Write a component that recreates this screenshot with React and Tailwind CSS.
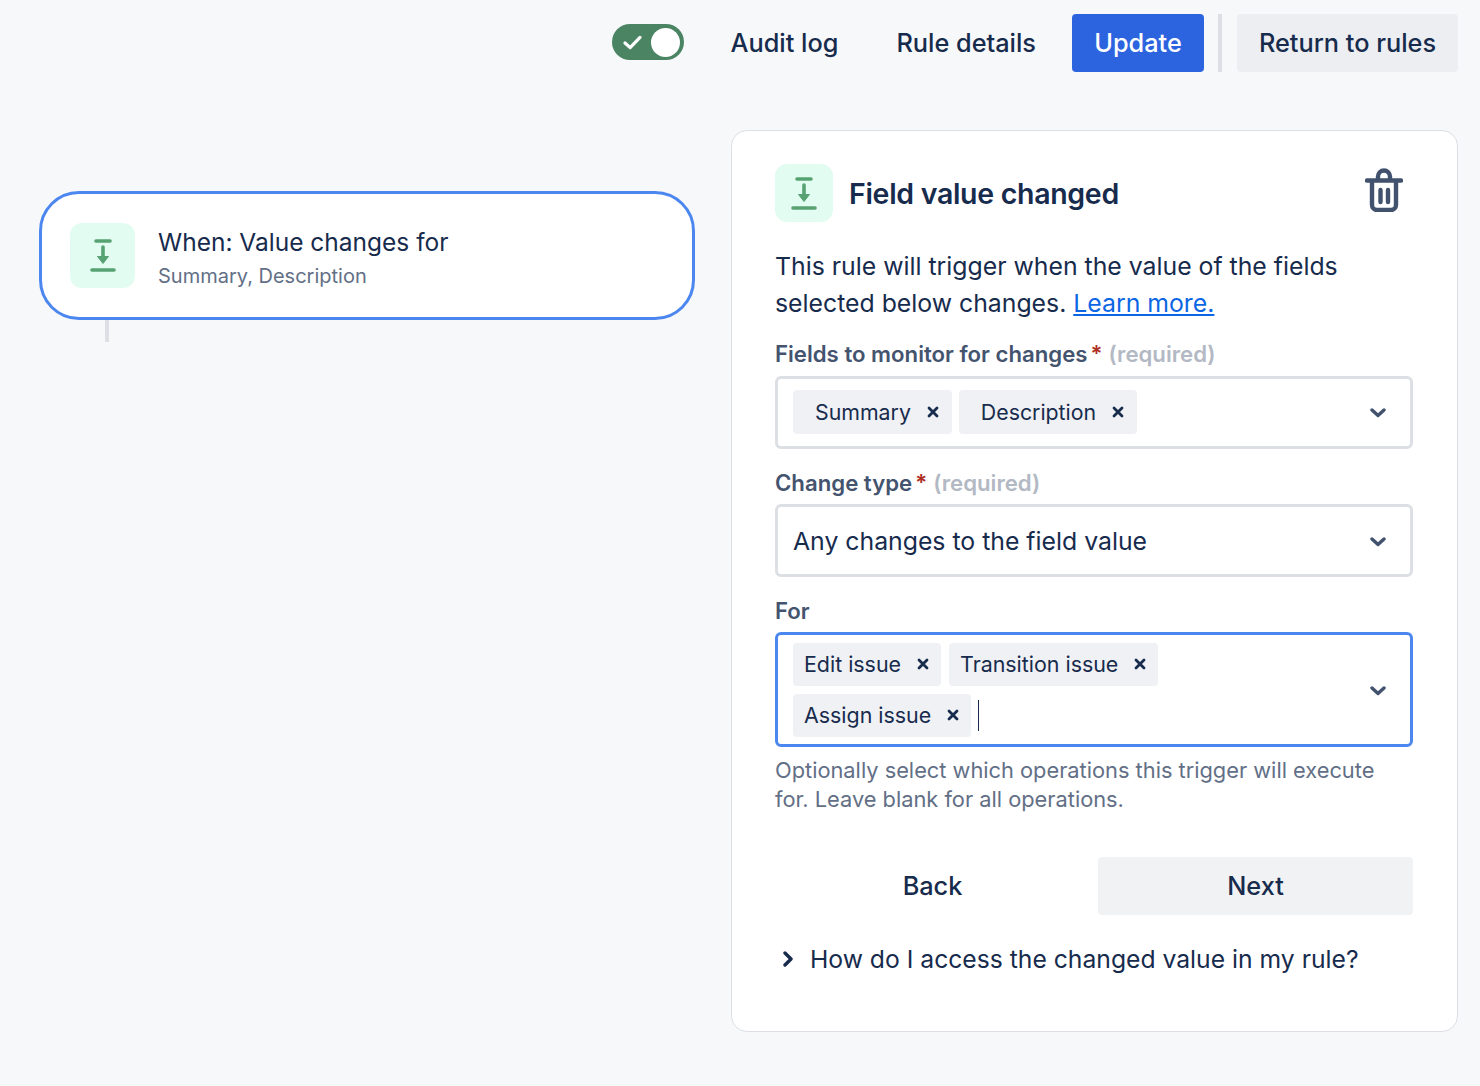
import React from 'react';

const TriggerIcon = ({ className }) => (
  <svg viewBox="0 0 26 33" className={className} fill="none">
    <path d="M6 2h14" stroke="#57a273" strokeWidth="3.6" strokeLinecap="round" />
    <path d="M2 31h22" stroke="#57a273" strokeWidth="3.6" strokeLinecap="round" />
    <path d="M13 8v10" stroke="#57a273" strokeWidth="3.6" strokeLinecap="round" />
    <path d="M7.5 17.5h11L13 24.5z" fill="#57a273" stroke="#57a273" strokeWidth="1" strokeLinejoin="round" />
  </svg>
);

const Chevron = () => (
  <svg viewBox="0 0 16 10" className="h-[10px] w-[16px]" fill="none">
    <path d="M2 2l6 5.5L14 2" stroke="#42526e" strokeWidth="3.4" strokeLinecap="round" strokeLinejoin="round" />
  </svg>
);

const Cross = () => (
  <svg viewBox="0 0 12 12" className="h-[12px] w-[12px]" fill="none">
    <path d="M2 2l8 8M10 2l-8 8" stroke="#172b4d" strokeWidth="2.8" strokeLinecap="round" />
  </svg>
);

const Tag = ({ label, wide }) => (
  <span className={`flex items-center rounded-[4px] bg-[#f0f1f4] text-[#172b4d] ${wide ? 'h-[44px] pl-[22px] pr-[13px] text-[21.3px]' : 'h-[43px] pl-[11px] pr-[12px] text-[21.4px]'}`}>
    <span className={wide ? 'pt-[2px]' : ''}>{label}</span>
    <span className="ml-[16px]"><Cross /></span>
  </span>
);

const Label = ({ text, required }) => (
  <div className="flex items-baseline text-[22.2px] leading-[28px] font-semibold text-[#44546f]">
    {text}
    {required && (
      <>
        <span className="ml-[3px] text-[#ae2e24]">*</span>
        <span className="ml-[6px] text-[#b3b9c4]">(required)</span>
      </>
    )}
  </div>
);

export default function App() {
  return (
    <div className="min-h-[1086px] bg-[#f7f8f9] font-['Inter',sans-serif] text-[#172b4d]">
      {/* Top bar */}
      <header className="flex h-[72px] items-end justify-end pr-[22px]">
        <div className="flex items-center">
          <div className="mb-[2px] flex h-[36px] w-[72px] items-center justify-between rounded-full bg-[#4a8463] pl-[11px] pr-[4px]">
            <svg viewBox="0 0 20 16" className="h-[15px] w-[19px]" fill="none">
              <path d="M2 8.5l5.5 5L18 2.5" stroke="#fff" strokeWidth="3.4" strokeLinecap="round" strokeLinejoin="round" />
            </svg>
            <span className="h-[29px] w-[29px] rounded-full bg-white" />
          </div>
          <span className="mb-[1px] ml-[47px] text-[25.3px] font-medium">Audit log</span>
          <span className="mb-[1px] ml-[58px] text-[25.3px] font-medium">Rule details</span>
          <button className="ml-[36px] h-[58px] w-[132px] rounded-[4px] bg-[#2c64e0] pb-[1px] text-[25.3px] font-medium text-white">Update</button>
          <span className="ml-[14px] h-[58px] w-[4px] bg-[#dcdfe4]" />
          <button className="ml-[15px] h-[58px] w-[221px] rounded-[4px] bg-[#eceef1] pb-[1px] text-[25.3px] font-medium">Return to rules</button>
        </div>
      </header>

      <div className="flex items-start pl-[39px] pt-[58px]">
        {/* Trigger node */}
        <div className="mt-[61px] w-[656px]">
          <div className="flex h-[129px] items-center rounded-[40px] border-[3px] border-[#4c87f0] bg-white pl-[28px]">
            <span className="flex h-[65px] w-[65px] items-center justify-center rounded-[12px] bg-[#e3fcf2]">
              <TriggerIcon className="h-[33px] w-[26px]" />
            </span>
            <div className="ml-[23px] pt-[4px]">
              <div className="text-[24.5px] leading-[34px]">When: Value changes for</div>
              <div className="mt-[3px] text-[20px] leading-[28px] text-[#626f86]">Summary, Description</div>
            </div>
          </div>
          <div className="ml-[66px] h-[22px] w-[4px] bg-[#dcdfe4]" />
        </div>

        {/* Config panel */}
        <section className="ml-[36px] h-[902px] w-[727px] rounded-[16px] border border-[#dcdfe4] bg-white pl-[43px] pr-[44px] pt-[33px]">
          <div className="flex items-center">
            <span className="flex h-[58px] w-[58px] items-center justify-center rounded-[12px] bg-[#e3fcf2]">
              <TriggerIcon className="h-[33px] w-[26px]" />
            </span>
            <h2 className="ml-[16px] pt-[2px] text-[28.5px] font-semibold tracking-[-0.3px]">Field value changed</h2>
            <svg viewBox="0 0 38 44" className="mb-[6px] ml-auto mr-[10px] h-[44px] w-[38px]" fill="none">
              <path d="M2 12.5h34" stroke="#42526e" strokeWidth="4.4" strokeLinecap="round" />
              <path d="M13 12V8.5a6 6 0 0112 0V12" stroke="#42526e" strokeWidth="4.4" />
              <path d="M7 13v24a5 5 0 005 5h14a5 5 0 005-5V13" stroke="#42526e" strokeWidth="4.4" />
              <path d="M15.5 22v12M23 22v12" stroke="#42526e" strokeWidth="4.4" strokeLinecap="round" />
            </svg>
          </div>

          <p className="mt-[26px] text-[24.8px] leading-[37px]">
            This rule will trigger when the value of the fields selected below changes.{' '}
            <a href="#" className="text-[#0c66e4] underline">Learn more.</a>
          </p>

          <div className="mt-[18px]"><Label text="Fields to monitor for changes" required /></div>
          <div className="mt-[8px] flex h-[73px] items-center justify-between rounded-[6px] border-[3px] border-[#dcdfe4] pl-[15px] pr-[24px]">
            <div className="flex gap-[7px] pb-[2px]">
              <Tag label="Summary" wide />
              <Tag label="Description" wide />
            </div>
            <Chevron />
          </div>

          <div className="mt-[20px]"><Label text="Change type" required /></div>
          <div className="mt-[7px] flex h-[73px] items-center justify-between rounded-[6px] border-[3px] border-[#dcdfe4] pl-[15px] pr-[24px] pt-[2px]">
            <span className="text-[24.8px]">Any changes to the field value</span>
            <Chevron />
          </div>

          <div className="mt-[20px]"><Label text="For" /></div>
          <div className="mt-[7px] flex h-[115px] items-center justify-between rounded-[6px] border-[3px] border-[#4c87f0] pl-[15px] pr-[24px] pt-[2px]">
            <div className="flex flex-col gap-[8px] pb-[2px]">
              <div className="flex gap-[8px]">
                <Tag label="Edit issue" />
                <Tag label="Transition issue" />
              </div>
              <div className="flex items-center">
                <Tag label="Assign issue" />
                <span className="ml-[7px] h-[31px] w-[1px] bg-[#172b4d]" />
              </div>
            </div>
            <Chevron />
          </div>

          <p className="mt-[9px] text-[21.8px] leading-[29px] text-[#626f86]">
            Optionally select which operations this trigger will execute for. Leave blank for all operations.
          </p>

          <div className="mt-[43px] flex gap-[8px]">
            <button className="h-[58px] flex-1 pb-[1px] text-[25.3px] font-medium">Back</button>
            <button className="h-[58px] flex-1 rounded-[4px] bg-[#f1f2f4] pb-[1px] text-[25.3px] font-medium">Next</button>
          </div>

          <div className="mt-[26px] flex items-center pl-[8px]">
            <svg viewBox="0 0 10 16" className="h-[16px] w-[10px]" fill="none">
              <path d="M2 2l6 6-6 6" stroke="#172b4d" strokeWidth="3.4" strokeLinecap="round" strokeLinejoin="round" />
            </svg>
            <span className="ml-[17px] text-[24.7px] leading-[36px]">How do I access the changed value in my rule?</span>
          </div>
        </section>
      </div>
    </div>
  );
}
